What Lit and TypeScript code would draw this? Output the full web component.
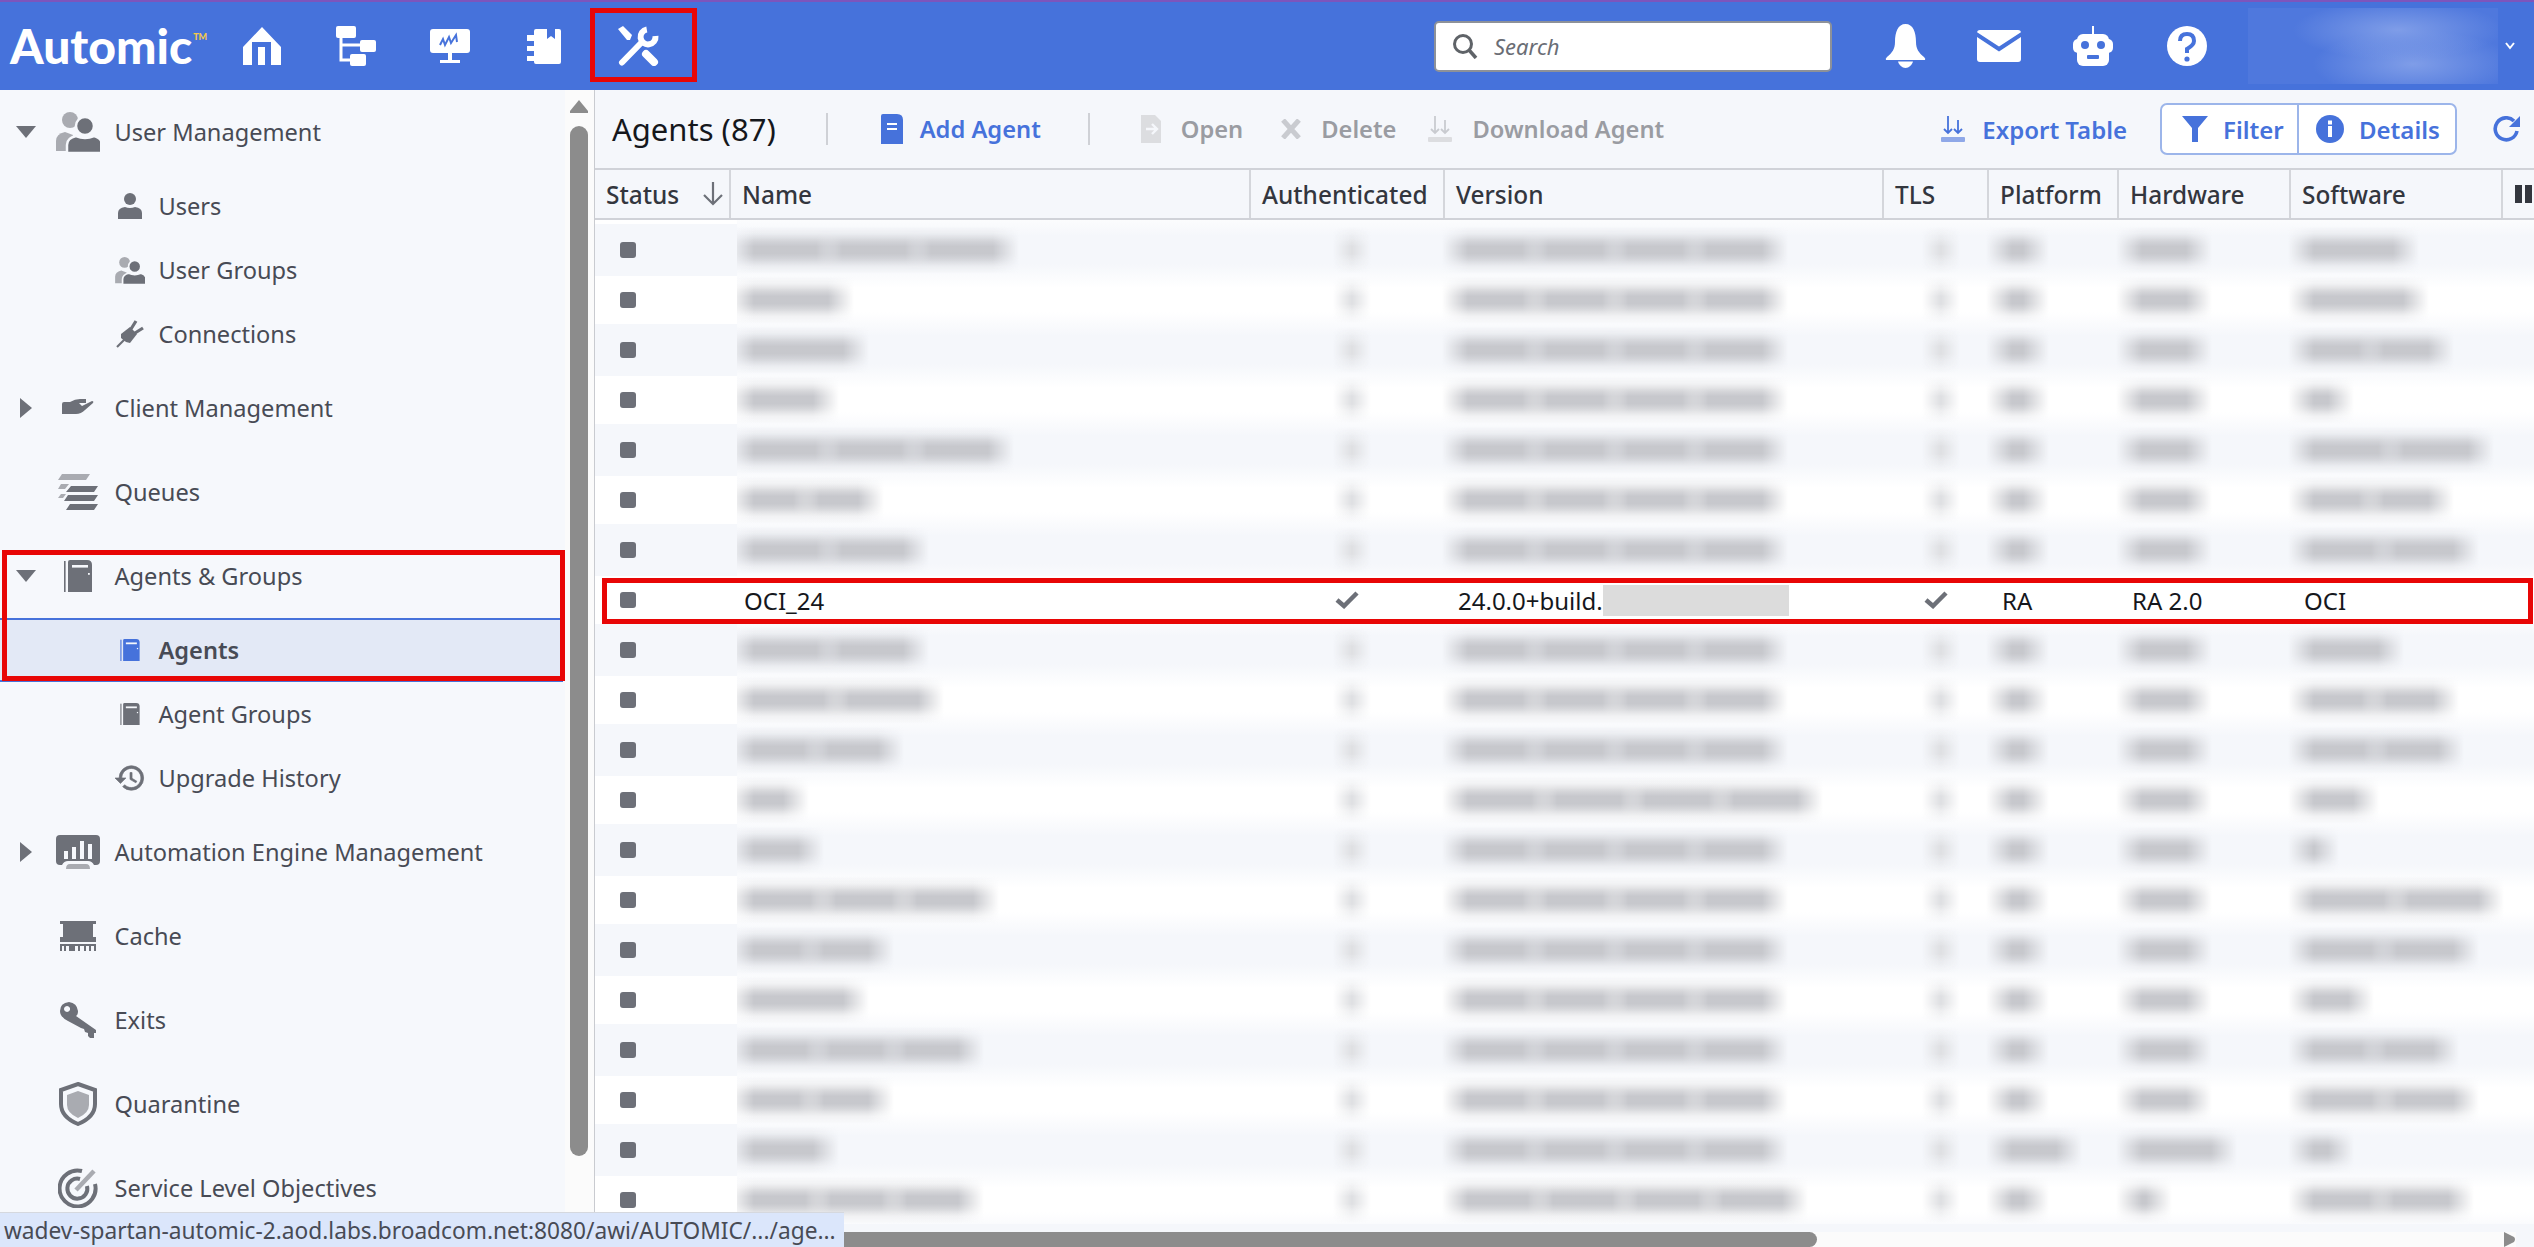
import { LitElement, html, css } from "lit";
import { customElement } from "lit/decorators.js";

const D = "#6d7078";
const L = "#a9abb1";
const B = "#4672db";
const BG = "#f6f8fc";

const people = (w: number, h: number) => html`<svg width=${w} height=${h} viewBox="0 0 44 40"><circle fill=${L} cx="14" cy="8" r="8"/><path fill=${L} d="M0 39V29q0-7 9-9l8 3-5 16z"/><circle fill=${D} stroke=${BG} stroke-width="2.500" cx="29" cy="14" r="9"/><path fill=${D} stroke=${BG} stroke-width="2.500" d="M11 41v-8q0-7 9-9q9 4 18 0q8 2 8 9v8z"/></svg>`;
const book = (w: number, h: number, c: string) => html`<svg width=${w} height=${h} viewBox="0 0 28 32"><rect x="0" y="1" width="1.600" height="31" fill=${c}/><path fill=${c} d="M4 2q0-2 2-2h17q5 0 5 5v27H4z"/><rect x="8" y="5" width="16" height="2.600" fill=${BG}/><rect x="24" y="13" width="1.800" height="1.800" fill=${BG}/></svg>`;

const icons: Record<string, unknown> = {
  userMgmt: people(44, 40),
  user: html`<svg width="24" height="26" viewBox="0 0 24 26"><circle fill=${D} cx="12" cy="6" r="6"/><path fill=${D} d="M0 26v-6q0-5 7-6q5 2 10 0q7 1 7 6v6z"/></svg>`,
  groups: people(30, 27),
  plug: html`<svg width="28" height="28" viewBox="0 0 28 28"><path d="M1 27l8-8" stroke=${D} stroke-width="2.200" fill="none"/><path fill=${D} d="M5 14l9-7 7 7-7 9-4-1-5-4z"/><path d="M15 9l5-8M19 13l8-5" stroke=${D} stroke-width="3.200" fill="none"/></svg>`,
  hand: html`<svg width="32" height="22" viewBox="0 0 32 22"><path fill=${D} d="M0 7q0-2 2-2h6q5-3 10-3h6v4h-7l3 3 10-5q2 0 1 2l-8 7q-4 4-9 4H0z"/></svg>`,
  queues: html`<svg width="40" height="36" viewBox="0 0 40 36"><path fill=${L} d="M4 0h28l-4 6H0zM3 10h8l-4 5H0zM3 20h5l-3 4H0z"/><path fill=${D} d="M13 12h27l-4 6H8zM10 21h30l-4 6H6zM12 30h28l-4 6H8z"/></svg>`,
  book: book(28, 32, D),
  bookBlue: book(20, 22, B),
  bookSm: book(20, 22, D),
  history: html`<svg width="30" height="30" viewBox="1 3 22 18"><path fill=${D} stroke=${D} stroke-width=".5" d="M13 3a9 9 0 0 0-9 9H1l3.890 3.890.070.140L9 12H6c0-3.870 3.130-7 7-7s7 3.130 7 7-3.130 7-7 7c-1.930 0-3.680-.790-4.940-2.060l-1.420 1.420A8.954 8.954 0 0 0 13 21a9 9 0 0 0 0-18zm-1 5v5l4.280 2.540.720-1.210-3.500-2.080V8H12z"/></svg>`,
  aem: html`<svg width="44" height="34" viewBox="0 0 44 34"><rect width="44" height="30" rx="4" fill=${D}/><path fill=${BG} d="M8 16h4v8H8zM16 12h4v12h-4zM24 6h4v18h-4zM32 9h4v15h-4zM6 30q2-4 6-4h20q4 0 6 4z"/><path fill=${L} d="M10 34q0-5 4-5h16q4 0 4 5z"/></svg>`,
  cache: html`<svg width="36" height="30" viewBox="0 0 36 30"><path fill=${D} d="M0 0h36v3h-3v13h3v5H0v-5h3V3H0zM0 23h36v7h-2v-5h-3v5h-2v-5h-3v5h-2v-5h-4v5h-2v-5h-3v5H9v-5H6v5H4v-5H2v5H0z"/></svg>`,
  key: html`<svg width="36" height="36" viewBox="0 0 36 36"><path fill-rule="evenodd" fill=${D} d="M9 0q8 1 9 9 0 4-2 5l20 14v3h-2v5h-4l-2-2v-3l-3-1-1-3-3-1L8 19Q0 15 0 9 0 1 9 0zM7 4a3 3 0 1 0 .1 0z"/></svg>`,
  shield: html`<svg width="40" height="44" viewBox="0 0 40 44"><path d="M20 2l17 6v14q0 13-17 20Q3 35 3 22V8z" fill="none" stroke=${D} stroke-width="4"/><path d="M20 9l11 4v10q0 8-11 13Q9 31 9 23V13z" fill=${L}/></svg>`,
  target: html`<svg width="40" height="40" viewBox="0 0 40 40"><g fill="none" stroke=${D}><path stroke-width="4" d="M24 3A18 18 0 1 0 37 16"/><path stroke-width="4" d="M22 11A10 10 0 1 0 29 18"/></g><path d="M18 22L36 3" stroke=${L} stroke-width="4.500"/></svg>`,
};

type It = { t: string; i: string; c?: "d" | "r"; kids?: { t: string; i: string; sel?: boolean }[] };
const tree: It[] = [
  { t: "User Management", i: "userMgmt", c: "d", kids: [{ t: "Users", i: "user" }, { t: "User Groups", i: "groups" }, { t: "Connections", i: "plug" }] },
  { t: "Client Management", i: "hand", c: "r" },
  { t: "Queues", i: "queues" },
  { t: "Agents & Groups", i: "book", c: "d", kids: [{ t: "Agents", i: "bookBlue", sel: true }, { t: "Agent Groups", i: "bookSm" }, { t: "Upgrade History", i: "history" }] },
  { t: "Automation Engine Management", i: "aem", c: "r" },
  { t: "Cache", i: "cache" },
  { t: "Exits", i: "key" },
  { t: "Quarantine", i: "shield" },
  { t: "Service Level Objectives", i: "target" },
];

// redacted row data: name, version, platform, hardware, software smudge widths
const before = [
  [265, 320, 37, 70, 105], [100, 320, 37, 70, 115], [115, 320, 37, 70, 140], [85, 320, 37, 70, 40],
  [260, 320, 37, 70, 180], [130, 320, 37, 70, 140], [175, 320, 37, 70, 165],
];
const after = [
  [175, 320, 37, 70, 90], [190, 320, 37, 70, 145], [150, 320, 37, 70, 150], [55, 355, 37, 70, 65],
  [70, 320, 37, 70, 25], [245, 320, 37, 70, 190], [140, 320, 37, 70, 165], [115, 320, 37, 70, 60],
  [230, 320, 37, 70, 145], [140, 320, 37, 70, 165], [85, 320, 70, 95, 40], [230, 340, 37, 30, 160],
];

const columns = ["Name", "Authenticated", "Version", "TLS", "Platform", "Hardware", "Software"];

const check = html`<svg width="24" height="18" viewBox="0 0 24 18"><path d="M2 9l7 6L22 2" fill="none" stroke=${D} stroke-width="4.500"/></svg>`;
const dlIcon = (arrow: string, bar: string) => html`<svg width="24" height="26" viewBox="0 0 24 26"><g fill="none" stroke=${arrow} stroke-width="1.800"><path d="M7 0v17M3 13l4 4 4-4"/><path d="M17 4v13M13 13l4 4 4-4"/></g><rect x="0" y="21" width="24" height="5" rx="1" fill=${bar}/></svg>`;

@customElement("app-root")
export class AppRoot extends LitElement {
  static styles = css`
    :host { display: block; width: 100%; height: 100vh; overflow: hidden; position: relative; font-family: "Noto Sans", "Open Sans", sans-serif; color: #484b55; background: #f6f8fc; }
    * { box-sizing: border-box; }
    svg { display: block; flex: none; }
    .header { height: 90px; background: #4672db; border-top: 2px solid #7d55bc; display: flex; align-items: center; color: #fff; }
    .logo { width: 215px; padding-left: 10px; display: flex; align-items: flex-start; font-family: Lato, "Liberation Sans", sans-serif; font-weight: 900; font-size: 48px; line-height: 1; }
    .tm { font-size: 9px; color: #f2c94c; margin: 10px 0 0 1px; }
    .slot { width: 94px; display: flex; justify-content: center; align-items: center; }
    .search { margin-left: auto; width: 398px; height: 51px; background: #fff; border: 2px solid #8d9199; border-radius: 5px; display: flex; align-items: center; padding-left: 16px; gap: 16px; font-style: italic; font-size: 22px; color: #6a6d75; margin-right: 26px; }
    .user { width: 250px; height: 76px; margin-left: 14px; background:
      radial-gradient(ellipse 105px 30px at 150px 22px, #7f9de8, transparent),
      radial-gradient(ellipse 100px 34px at 165px 56px, #7f9de8, transparent),
      #4f78dd; }
    .chev { margin: 0 19px 0 7px; }
    .main { display: flex; height: calc(100vh - 90px); }
    .side { width: 595px; flex: none; display: flex; border-right: 1px solid #c9cbd0; }
    .list { width: 565px; flex: none; overflow: hidden; }
    .track { flex: 1; background: #fbfbfb; padding: 10px 0 0 5px; display: flex; flex-direction: column; }
    .thumb { width: 18px; height: 1030px; margin-top: 13px; border-radius: 9px; background: #8c8c8c; flex: none; }
    .item { height: 84px; display: flex; align-items: center; font-size: 23.600px; white-space: nowrap; }
    .caret { width: 56px; flex: none; display: flex; justify-content: center; padding-right: 4px; }
    .ico { width: 44px; flex: none; display: flex; justify-content: center; margin-right: 14.500px; }
    .kid { height: 64px; display: flex; align-items: center; padding-left: 115px; font-size: 23.600px; white-space: nowrap; }
    .kid .ico { width: 30px; margin-right: 13.500px; }
    .kid.sel { height: 62px; margin-bottom: 2px; background: #e3e9f6; border-top: 2px solid #4672db; box-shadow: 0 2px 0 #4672db; font-weight: 600; width: 563px; }
    .pane { flex: 1; min-width: 0; position: relative; overflow: hidden; background: #f5f7fb; display: flex; flex-direction: column; }
    .toolbar { height: 78px; flex: none; display: flex; align-items: center; padding: 0 14px 0 17px; font-size: 23.700px; white-space: nowrap; }
    .title { font-size: 31px; color: #15171c; }
    .sep { width: 2px; height: 32px; background: #cfd1d6; flex: none; }
    .s1 { margin: 0 53px 0 50px; }
    .s2 { margin: 0 51px 0 47px; }
    .btn { display: flex; align-items: center; gap: 20px; font-weight: 600; margin-right: 38px; }
    .btn.add { gap: 17px; margin-right: 0; color: #4672db; }
    .btn.off { color: #9a9ca2; }
    .btn.off.del { margin-right: 32px; }
    .btn.off.dl { margin-right: 0; }
    .btn.export { margin-left: auto; margin-right: 33px; gap: 17px; color: #4672db; font-size: 24px; }
    .seg { display: flex; height: 52px; background: #fff; border: 2px solid #9cb5ea; border-radius: 7px; margin-right: 36px; color: #4672db; font-weight: 600; font-size: 24px; }
    .seg div { display: flex; align-items: center; gap: 15px; }
    .seg .f { width: 137px; padding-left: 20px; border-right: 2px solid #9cb5ea; }
    .seg .d { width: 156px; padding-left: 17px; }
    .thead { height: 52px; flex: none; display: flex; border-top: 2px solid #d0d2d8; border-bottom: 2px solid #d0d2d8; font-size: 24.400px; font-weight: 500; color: #33363e; white-space: nowrap; }
    .th { height: 100%; display: flex; align-items: center; padding-left: 11px; border-right: 2px solid #d4d6db; flex: none; }
    .th.st { width: 136px; justify-content: space-between; padding-right: 5px; }
    .c0 { width: 520px; } .c1 { width: 194px; } .c2 { width: 439px; } .c3 { width: 105px; }
    .c4 { width: 130px; } .c5 { width: 172px; } .c6 { width: 212px; }
    .pause { flex: 1; display: flex; gap: 3px; padding: 15px 0 0 12px; height: 100%; }
    .pause i { width: 7px; height: 18px; background: #33363e; flex: none; }
    .body { flex: 1; display: flex; min-height: 0; }
    .stcol { width: 142px; flex: none; background: #fff; padding-top: 4px; }
    .st-row { height: 48px; display: flex; align-items: center; padding-left: 25px; background: #fff; }
    .st-row.shade { height: 52px; background: #f5f7fb; }
    .dot { width: 16px; height: 16px; border-radius: 3px; background: #6d7078; }
    .data { flex: 1; min-width: 0; display: flex; flex-direction: column; }
    .data .c0 { width: 514px; }
    .clip { overflow: hidden; flex: none; background: linear-gradient(180deg, #f5f7fb 0 24px, #fff 48px 72px, #f5f7fb 96px 100px) 0 -84px / 100% 100px; }
    .clip.top { padding-top: 4px; background-position: 0 -80px; }
    .row { display: flex; align-items: center; height: 48px; }
    .row.shade { height: 52px; }
    .cell { flex: none; padding-left: 10px; display: flex; align-items: center; height: 100%; }
    .data .c0.b { padding-left: 4px; }
    .smudge { height: 48px; flex: none; margin-right: -26px;
      background: linear-gradient(180deg, rgba(196,197,202,0) 0%, rgba(196,197,202,.2) 16%, rgba(196,197,202,.65) 30%, rgba(196,197,202,.95) 42%, rgba(196,197,202,.95) 58%, rgba(196,197,202,.65) 70%, rgba(196,197,202,.2) 84%, rgba(196,197,202,0) 100%);
      -webkit-mask-image: linear-gradient(90deg, transparent, #000 26px, #000 calc(100% - 26px), transparent);
      mask-image: linear-gradient(90deg, transparent, #000 26px, #000 calc(100% - 26px), transparent); }
    .smudge:first-child { margin-left: -13px; }
    .pip { height: 46px; width: 38px; margin-left: 72px; flex: none;
      background: linear-gradient(180deg, rgba(222,223,226,0) 0%, rgba(222,223,226,.5) 25%, #dedfe2 42%, #dedfe2 58%, rgba(222,223,226,.5) 75%, rgba(222,223,226,0) 100%);
      -webkit-mask-image: linear-gradient(90deg, transparent, #000 50%, transparent);
      mask-image: linear-gradient(90deg, transparent, #000 50%, transparent); }
    .pip.t { margin-left: 28px; }
    .row.oci { height: 48px; background: #fff; font-size: 24px; color: #15171c; white-space: nowrap; }
    .oci .cell { padding-left: 13px; }
    .data .oci .c0 { padding-left: 7px; }
    .oci .mid { padding-left: 84px; }
    .oci .ck { padding-left: 40px; }
    .mask { width: 186px; height: 31px; background: #dcdcdc; }
    .hbar { position: absolute; left: 0; right: 18px; bottom: 0; height: 15px; background: #fbfbfb; display: flex; justify-content: space-between; }
    .hthumb { width: 1222px; height: 15px; border-radius: 0 8px 8px 0; background: #8c8c8c; }
    .status { position: absolute; left: 0; bottom: 0; width: 844px; height: 35px; background: #dbe6fb; border-top: 1px solid #d5d8de; padding-left: 4px; font-size: 22.700px; color: #484b55; white-space: nowrap; line-height: 36px; }
    .red { position: absolute; border: 5px solid #e80606; pointer-events: none; }
    .r1 { left: 590px; top: 8px; width: 107px; height: 74px; }
    .r2 { left: 2px; top: 550px; width: 563px; height: 131px; }
    .r3 { left: 602px; top: 578px; width: 1931px; height: 46px; }
  `;

  private caret(c?: "d" | "r") {
    if (c === "d") return html`<svg width="20" height="12" viewBox="0 0 20 12"><path d="M0 0h20L10 12z" fill=${D}/></svg>`;
    if (c === "r") return html`<svg width="12" height="20" viewBox="0 0 12 20"><path d="M0 0l12 10L0 20z" fill=${D}/></svg>`;
    return "";
  }

  private smudge(w: number) {
    const n = Math.max(1, Math.round(w / 85));
    const each = w / n + 26;
    return Array.from({ length: n }, () => html`<div class="smudge" style="width:${each}px"></div>`);
  }

  private row(r: number[], i: number) {
    return html`<div class="row ${i % 2 === 0 ? "shade" : ""}">
      <div class="cell c0 b">${this.smudge(r[0])}</div>
      <div class="cell c1"><div class="pip"></div></div>
      <div class="cell c2">${this.smudge(r[1])}</div>
      <div class="cell c3"><div class="pip t"></div></div>
      <div class="cell c4">${this.smudge(r[2])}</div>
      <div class="cell c5">${this.smudge(r[3])}</div>
      <div class="cell c6">${this.smudge(r[4])}</div>
    </div>`;
  }

  render() {
    const statuses = Array.from({ length: 21 }, (_, i) => i);
    return html`
      <div class="header">
        <div class="logo">Automic<span class="tm">TM</span></div>
        <div class="slot"><svg width="38" height="38" viewBox="0 0 38 38"><path fill="#fff" fill-rule="evenodd" d="M19 0l19 20v18H28V15H9v23H0V20zM15 20h7v18h-7z"/></svg></div>
        <div class="slot"><svg width="40" height="40" viewBox="0 0 40 40"><g fill="#fff"><rect width="20" height="12" rx="2"/><rect x="24" y="14" width="16" height="12" rx="2"/><rect x="14" y="28" width="16" height="12" rx="2"/></g><path d="M5 12v22h10M5 19h20" stroke="#fff" stroke-width="3" fill="none"/></svg></div>
        <div class="slot"><svg width="40" height="35" viewBox="0 0 40 35"><rect width="40" height="24" rx="3" fill="#fff"/><rect x="18" y="24" width="4" height="7" fill="#fff"/><rect x="10" y="31" width="20" height="3" fill="#fff"/><path d="M10 16l3-6 2 6 4-8 2 6 5-8 1 7" fill="none" stroke=${B} stroke-width="2"/></svg></div>
        <div class="slot"><svg width="34" height="35" viewBox="0 0 34 35"><path fill="#fff" d="M7 2q0-2 2-2h11v10l4-3 4 3V0h4q2 0 2 2v31q0 2-2 2H9q-2 0-2-2z"/><path fill="#fff" d="M0 6h7v6H0zM0 17h7v5H0zM0 27h7v5H0z"/></svg></div>
        <div class="slot"><svg width="41" height="40" viewBox="0 0 41 40"><g fill="none" stroke="#fff"><path stroke-width="6" d="M28.800 3.500A7.500 7.500 0 1 0 37.500 10"/><path stroke-width="6" stroke-linecap="round" d="M4 36.500L24 16"/><path stroke-width="8" stroke-linecap="round" d="M28 28l8 8"/></g><path fill="#fff" d="M0 3l5-3 9 9-2 5-3 0z"/></svg></div>
        <div class="search"><svg width="26" height="26" viewBox="0 0 26 26"><circle cx="11" cy="11" r="8.500" fill="none" stroke="#5f6368" stroke-width="3"/><path d="M17 17l7 8" stroke="#5f6368" stroke-width="3.500"/></svg>Search</div>
        <div class="slot"><svg width="41" height="44" viewBox="0 0 41 44"><path fill="#fff" d="M20.500 0C28 0 31 8 31 18c0 7 3 11 8 15q2 2 1 3H1q-1-1 1-3c5-4 8-8 8-15C10 8 13 0 20.500 0z"/><path fill="#fff" d="M13 37.500h15C27 41 24 44 20.500 44S14 41 13 37.500z"/></svg></div>
        <div class="slot"><svg width="44" height="32" viewBox="0 0 44 32"><rect width="44" height="32" rx="3" fill="#fff"/><path d="M-1 4l23 15L45 4" fill="none" stroke=${B} stroke-width="4"/></svg></div>
        <div class="slot"><svg width="40" height="40" viewBox="0 0 40 40"><rect x="19" width="2" height="9" fill="#fff"/><rect x="4" y="8" width="32" height="32" rx="6" fill="#fff"/><rect y="13" width="40" height="14" rx="5" fill="#fff"/><circle cx="12" cy="19" r="4" fill=${B}/><circle cx="28" cy="19" r="4" fill=${B}/><rect x="14" y="29" width="12" height="4" rx="1" fill=${B}/></svg></div>
        <div class="slot"><svg width="40" height="40" viewBox="0 0 40 40"><circle cx="20" cy="20" r="20" fill="#fff"/><path d="M13 15q0-7 7-7t7 7q0 4-7 8v4" fill="none" stroke=${B} stroke-width="4"/><circle cx="20" cy="33" r="2.600" fill=${B}/></svg></div>
        <div class="user"></div>
        <svg class="chev" width="10" height="8" viewBox="0 0 10 8"><path d="M1 1l4 5 4-5" fill="none" stroke="#fff" stroke-width="2"/></svg>
      </div>
      <div class="main">
        <div class="side">
          <div class="list">
            ${tree.map(
              (n) => html`<div class="item"><div class="caret">${this.caret(n.c)}</div><div class="ico">${icons[n.i]}</div>${n.t}</div>
                ${(n.kids ?? []).map((k) => html`<div class="kid ${k.sel ? "sel" : ""}"><div class="ico">${icons[k.i]}</div>${k.t}</div>`)}`
            )}
          </div>
          <div class="track">
            <svg width="18" height="13" viewBox="0 0 18 13"><path d="M9 0l9 11v2H0v-2z" fill="#8c8c8c"/></svg>
            <div class="thumb"></div>
          </div>
        </div>
        <div class="pane">
          <div class="toolbar">
            <div class="title">Agents (87)</div>
            <div class="sep s1"></div>
            <div class="btn add"><svg width="22" height="30" viewBox="0 0 22 30"><path fill=${B} d="M0 2q0-2 2-2h14q6 0 6 6v24H0z"/><path fill="#fff" d="M6 9h10v2H6zM6 14h10v2H6z"/></svg>Add Agent</div>
            <div class="sep s2"></div>
            <div class="btn off"><svg width="20" height="28" viewBox="0 0 20 28"><path fill="#dcdde0" d="M0 0h14l6 6v22H0z"/><path d="M5 14h10M11 9l5 5-5 5" fill="none" stroke="#f5f7fb" stroke-width="2.400"/></svg>Open</div>
            <div class="btn off del"><svg width="20" height="20" viewBox="0 0 20 20"><path d="M2 1l16 18M18 1L2 19" stroke="#c9cbd0" stroke-width="5" fill="none"/></svg>Delete</div>
            <div class="btn off dl">${dlIcon("#c9cbd0", "#dcdde0")}Download Agent</div>
            <div class="btn export">${dlIcon(B, "#8fa8e8")}Export Table</div>
            <div class="seg">
              <div class="f"><svg width="26" height="26" viewBox="0 0 26 26"><path fill=${B} d="M0 0h26L16 12v14h-6V12z"/></svg>Filter</div>
              <div class="d"><svg width="28" height="28" viewBox="0 0 28 28"><circle cx="14" cy="14" r="14" fill=${B}/><rect x="12" y="11" width="4" height="11" fill="#fff"/><rect x="12" y="5.500" width="4" height="4" fill="#fff"/></svg>Details</div>
            </div>
            <svg width="27" height="26" viewBox="0 0 27 26"><path d="M21 5A11 11 0 1 0 24 15" fill="none" stroke=${B} stroke-width="3.600"/><path fill=${B} d="M27 0v11H16z"/></svg>
          </div>
          <div class="thead">
            <div class="th st">Status<svg width="22" height="24" viewBox="0 0 22 24"><path d="M11 0v22M2 13l9 9 9-9" fill="none" stroke=${D} stroke-width="2.200"/></svg></div>
            ${columns.map((c, i) => html`<div class="th c${i}">${c}</div>`)}
            <div class="pause"><i></i><i></i></div>
          </div>
          <div class="body">
            <div class="stcol">
              ${statuses.map((i) => html`<div class="st-row ${i % 2 === 0 ? "shade" : ""}"><div class="dot"></div></div>`)}
            </div>
            <div class="data">
              <div class="clip top">${before.map((r, i) => this.row(r, i))}</div>
              <div class="row oci">
                <div class="cell c0">OCI_24</div>
                <div class="cell c1 mid">${check}</div>
                <div class="cell c2">24.0.0+build.<div class="mask"></div></div>
                <div class="cell c3 ck">${check}</div>
                <div class="cell c4">RA</div>
                <div class="cell c5">RA 2.0</div>
                <div class="cell c6">OCI</div>
              </div>
              <div class="clip">${after.map((r, i) => this.row(r, i))}</div>
            </div>
          </div>
          <div class="hbar"><div class="hthumb"></div><svg width="12" height="15" viewBox="0 0 12 15"><path d="M0 0l10 5q2 2 0 5L0 15z" fill="#8c8c8c"/></svg></div>
        </div>
      </div>
      <div class="status">wadev-spartan-automic-2.aod.labs.broadcom.net:8080/awi/AUTOMIC/.../age...</div>
      <div class="red r1"></div>
      <div class="red r2"></div>
      <div class="red r3"></div>
    `;
  }
}
